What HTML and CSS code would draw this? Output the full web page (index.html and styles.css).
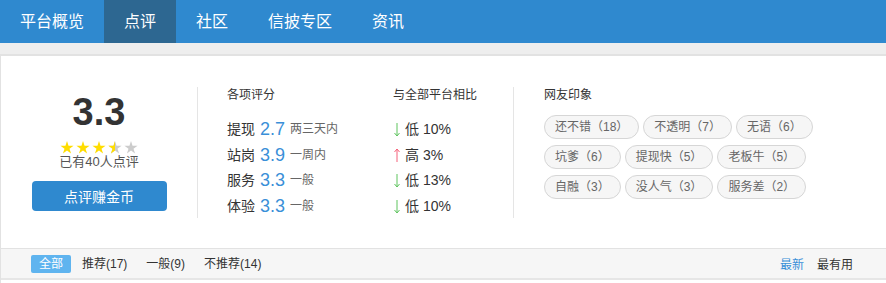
FILE: index.html
```html
<!DOCTYPE html>
<html lang="zh-CN">

<head>
    <meta charset="UTF-8">
    <meta name="viewport" content="width=device-width, initial-scale=1.0">
    <title>点评</title>
    <link rel="stylesheet" href="styles.css">
</head>

<body>
    <svg width="0" height="0" class="defs">
        <defs>
            <polygon id="star" points="7,0 8.55,4.77 13.56,4.77 9.51,7.71 11.06,12.48 7,9.54 2.94,12.48 4.49,7.71 0.44,4.77 5.45,4.77" />
            <clipPath id="half">
                <rect x="0" y="0" width="7" height="13" />
            </clipPath>
            <g id="down">
                <line x1="3" y1="0" x2="3" y2="13" />
                <polyline points="0.5,10 3,13 5.5,10" fill="none" />
            </g>
        </defs>
    </svg>

    <!-- NAV -->
    <nav class="nav">
        <a class="nav-item">平台概览</a>
        <a class="nav-item active">点评</a>
        <a class="nav-item">社区</a>
        <a class="nav-item">信披专区</a>
        <a class="nav-item">资讯</a>
    </nav>

    <main class="panel">
        <div class="summary">
            <!-- TOTAL SCORE -->
            <div class="col total">
                <div class="big-score">3.3</div>
                <svg class="stars" width="80" height="13" viewBox="0 0 80 13">
                    <use href="#star" x="1" fill="#ffdd00" />
                    <use href="#star" x="17" fill="#ffdd00" />
                    <use href="#star" x="33" fill="#ffdd00" />
                    <use href="#star" x="49" fill="#cccccc" />
                    <g transform="translate(49,0)"><use href="#star" fill="#ffdd00" clip-path="url(#half)" /></g>
                    <use href="#star" x="65" fill="#cccccc" />
                </svg>
                <p class="count">已有40人点评</p>
                <button class="btn">点评赚金币</button>
            </div>

            <!-- ITEM SCORES -->
            <div class="col items">
                <div class="sub">
                    <h4>各项评分</h4>
                    <ul class="rows">
                        <li>提现<span class="num">2.7</span><span class="desc">两三天内</span></li>
                        <li>站岗<span class="num">3.9</span><span class="desc">一周内</span></li>
                        <li>服务<span class="num">3.3</span><span class="desc">一般</span></li>
                        <li>体验<span class="num">3.3</span><span class="desc">一般</span></li>
                    </ul>
                </div>
                <div class="sub">
                    <h4>与全部平台相比</h4>
                    <ul class="rows">
                        <li><svg class="arrow down" width="6" height="14"><use href="#down" /></svg>低 10%</li>
                        <li><svg class="arrow up" width="6" height="14"><g transform="rotate(180 3 7)"><use href="#down" /></g></svg>高 3%</li>
                        <li><svg class="arrow down" width="6" height="14"><use href="#down" /></svg>低 13%</li>
                        <li><svg class="arrow down" width="6" height="14"><use href="#down" /></svg>低 10%</li>
                    </ul>
                </div>
            </div>

            <!-- TAGS -->
            <div class="col tags-col">
                <h4>网友印象</h4>
                <div class="tags">
                    <span class="tag">还不错（18）</span>
                    <span class="tag">不透明（7）</span>
                    <span class="tag">无语（6）</span>
                    <span class="tag">坑爹（6）</span>
                    <span class="tag">提现快（5）</span>
                    <span class="tag">老板牛（5）</span>
                    <span class="tag">自融（3）</span>
                    <span class="tag">没人气（3）</span>
                    <span class="tag">服务差（2）</span>
                </div>
            </div>
        </div>

        <!-- FILTER -->
        <div class="filter">
            <div class="filter-left">
                <span class="f-item current">全部</span>
                <span class="f-item">推荐(17)</span>
                <span class="f-item">一般(9)</span>
                <span class="f-item">不推荐(14)</span>
            </div>
            <div class="filter-right">
                <span class="sort current">最新</span>
                <span class="sort">最有用</span>
            </div>
        </div>
    </main>
</body>

</html>
```

FILE: styles.css
```css
* {
    margin: 0;
    padding: 0;
    box-sizing: border-box;
    font-family: 'Liberation Sans', 'Noto Sans CJK SC', sans-serif;
}

body {
    width: 886px;
    height: 283px;
    overflow: hidden;
    background-color: #eeeeee;
}

.defs {
    position: absolute;
}

ul {
    list-style: none;
}

/* NAV */
.nav {
    display: flex;
    height: 43px;
    background-color: #2f89cf;
}

.nav-item {
    padding: 0 20px;
    line-height: 43px;
    font-size: 16px;
    color: #fff;
}

.nav-item.active {
    background-color: #2d6791;
}

/* PANEL */
.panel {
    margin-top: 11px;
    width: 900px;
    height: 240px;
    background-color: #fff;
    border-top: 2px solid #e2e2e2;
    border-left: 1px solid #e2e2e2;
}

.summary {
    display: flex;
    padding: 31px 0 30px;
}

.col {
    height: 131px;
}

h4 {
    font-size: 12px;
    font-weight: normal;
    line-height: 16px;
    color: #333;
}

.total {
    width: 197px;
    border-right: 1px solid #e5e5e5;
    display: flex;
    flex-direction: column;
    align-items: center;
}

.big-score {
    margin-top: 6px;
    font-size: 38px;
    font-weight: bold;
    line-height: 38px;
    color: #333;
}

.stars {
    display: block;
    margin-top: 10px;
}

.count {
    margin-top: 0;
    font-size: 13px;
    line-height: 16px;
    color: #555;
}

.btn {
    margin-top: 11px;
    width: 135px;
    height: 30px;
    border: none;
    border-radius: 4px;
    background-color: #2f89cf;
    color: #fff;
    font-size: 14px;
}

.items {
    width: 316px;
    padding-left: 29px;
    border-right: 1px solid #e5e5e5;
    display: flex;
}

.sub:first-child {
    width: 166px;
}

.rows {
    margin-top: 14px;
}

.rows li {
    height: 25.6px;
    line-height: 25.6px;
    font-size: 14px;
    color: #333;
    display: flex;
    align-items: center;
}

.num {
    margin: 0 5px;
    font-size: 18px;
    color: #3a8fd8;
}

.desc {
    font-size: 12px;
    color: #666;
}

.arrow {
    margin-right: 5px;
    margin-left: 1px;
    stroke-width: 1;
}

.arrow.down {
    stroke: #5ec45e;
}

.arrow.up {
    stroke: #f5617a;
}

.tags-col {
    padding-left: 30px;
}

.tags {
    margin-top: 12px;
    width: 300px;
    display: flex;
    flex-wrap: wrap;
    gap: 6px 4px;
}

.tag {
    height: 24px;
    padding: 0 10px;
    line-height: 22px;
    font-size: 12px;
    color: #666;
    background-color: #f6f6f6;
    border: 1px solid #d6d6d6;
    border-radius: 12px;
}

/* FILTER */
.filter {
    width: 885px;
    height: 32px;
    display: flex;
    justify-content: space-between;
    align-items: center;
    padding: 0 33px 0 30px;
    background-color: #f6f6f6;
    border-top: 1px solid #e2e2e2;
    border-bottom: 2px solid #e6e6e6;
}

.filter-left {
    display: flex;
    gap: 3px;
}

.f-item {
    padding: 0 8px;
    height: 18px;
    line-height: 18px;
    font-size: 12px;
    color: #333;
    border-radius: 2px;
}

.f-item.current {
    background-color: #5fb4ef;
    color: #fff;
}

.filter-right {
    display: flex;
    gap: 13px;
}

.sort {
    font-size: 12px;
    color: #333;
}

.sort.current {
    color: #3a8fd8;
}
```
